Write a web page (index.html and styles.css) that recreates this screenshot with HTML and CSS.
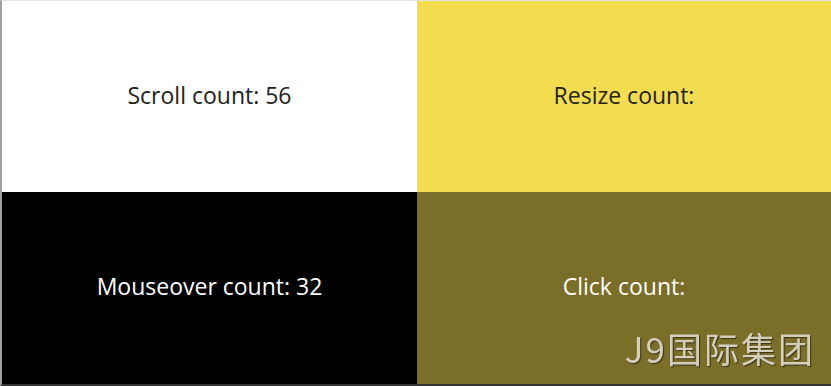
FILE: index.html
```html
<!DOCTYPE html>
<html lang="en">
<head>
  <meta charset="UTF-8">
  <title>Event counts</title>
  <link rel="stylesheet" href="styles.css">
</head>
<body>
  <div class="frame">
    <div class="box scroll">Scroll count: 56</div>
    <div class="box resize">Resize count:</div>
    <div class="box mouseover">Mouseover count: 32</div>
    <div class="box click">Click count:</div>
  </div>
  <div class="watermark">J9国际集团</div>
</body>
</html>
```

FILE: styles.css
```css
html, body {
  margin: 0;
  height: 100%;
  overflow: hidden;
}

body {
  font-family: 'Open Sans', 'Noto Sans', sans-serif;
  background-color: #ffffff;
}

.frame {
  height: 100%;
  box-sizing: border-box;
  border-left: 2px solid #a0a0a0;
  border-top: 1px solid #e2e2e2;
  border-bottom: 2px solid #333333;
  display: grid;
  grid-template-columns: 415px 1fr;
  grid-template-rows: 191px 1fr;
}

.box {
  display: flex;
  align-items: center;
  justify-content: center;
  font-size: 23px;
  padding-bottom: 4px;
}

.scroll {
  background-color: #ffffff;
  color: #222222;
}

.resize {
  background-color: #f3dd4e;
  color: #222222;
}

.mouseover {
  background-color: #000000;
  color: #ffffff;
}

.click {
  background-color: #7a6e28;
  color: #ffffff;
}

.watermark {
  position: fixed;
  right: 16px;
  bottom: 13px;
  font-family: 'Noto Sans CJK SC', sans-serif;
  font-size: 35px;
  letter-spacing: 2px;
  color: #d2cfbf;
  text-shadow: 1px 1px 1px #3a3410;
}
```
